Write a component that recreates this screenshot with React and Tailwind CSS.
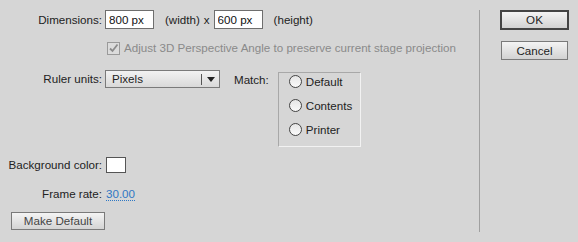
export default function App() {
  const font = { fontFamily: '"Liberation Sans", Arial, sans-serif' };
  return (
    <div
      className="w-[578px] h-[242px] bg-[#d6d6d6] text-[#222] text-[11.6px] flex overflow-hidden"
      style={font}
    >
      {/* left side: form */}
      <div className="w-[479px] flex flex-col pt-[10px]">
        {/* Dimensions */}
        <div className="flex items-center h-[19px]">
          <div className="w-[103px] text-right pr-[1px]">Dimensions:</div>
          <input
            readOnly
            value="800 px"
            className="ml-[2px] w-[49px] h-[19px] bg-white border border-[#6e6e6e] px-[3px] text-[11.6px] text-[#111] outline-none"
          />
          <span className="ml-[11px]">(width)</span>
          <span className="ml-[4px]">x</span>
          <input
            readOnly
            value="600 px"
            className="ml-[4px] w-[49px] h-[19px] bg-white border border-[#6e6e6e] px-[3px] text-[11.6px] text-[#111] outline-none"
          />
          <span className="ml-[11px]">(height)</span>
        </div>

        {/* Adjust 3D */}
        <div className="flex items-center h-[14px] mt-[12px] ml-[107px] text-[#8a8a8a]">
          <span className="w-[13px] h-[13px] border border-[#9a9a9a] bg-[#dcdcdc] flex items-center justify-center">
            <svg width="11" height="11" viewBox="0 0 11 11">
              <path d="M2 5.5 L4.5 8 L9.5 1.5" stroke="#8c8c8c" strokeWidth="1.8" fill="none" />
            </svg>
          </span>
          <span className="ml-[4px]">Adjust 3D Perspective Angle to preserve current stage projection</span>
        </div>

        {/* Ruler units + Match */}
        <div className="flex mt-[15px]">
          <div className="flex items-start">
            <div className="w-[103px] text-right pr-[1px] leading-[18px]">Ruler units:</div>
            <div className="ml-[2px] w-[115px] h-[18px] border border-[#7a7a7a] bg-gradient-to-b from-[#f2f2f2] to-[#d9d9d9] flex items-center">
              <span className="pl-[6px] flex-1">Pixels</span>
              <span className="w-[1px] h-[11px] bg-[#555]"></span>
              <span className="w-[17px] flex justify-center">
                <svg width="8" height="5" viewBox="0 0 8 5">
                  <path d="M0 0 H8 L4 5 Z" fill="#222" />
                </svg>
              </span>
            </div>
          </div>
          <div className="ml-[14px] leading-[18px] mt-[1px]">Match:</div>
          <div className="ml-[9px] mt-[2px] w-[83px] h-[75px] border border-t-[#a8a8a8] border-l-[#a8a8a8] border-r-[#f2f2f2] border-b-[#f2f2f2] flex flex-col pl-[10px] pt-[1px] gap-[9px]">
            {["Default", "Contents", "Printer"].map((t) => (
              <div key={t} className="flex items-center h-[15px]">
                <span className="w-[13px] h-[13px] rounded-full border border-[#444] bg-gradient-to-b from-[#e6e6e6] to-[#fafafa]"></span>
                <span className="ml-[4px]">{t}</span>
              </div>
            ))}
          </div>
        </div>

        {/* Background color */}
        <div className="flex items-center mt-[10px] h-[16px]">
          <div className="w-[103px] text-right pr-[1px]">Background color:</div>
          <span className="ml-[3px] w-[20px] h-[16px] bg-white border border-[#555]"></span>
        </div>

        {/* Frame rate */}
        <div className="flex items-center mt-[13px] h-[16px]">
          <div className="w-[103px] text-right pr-[1px]">Frame rate:</div>
          <span className="ml-[3px] text-[#2f78c4] border-b border-dotted border-[#2f78c4] leading-[13px]">30.00</span>
        </div>

        {/* Make Default */}
        <div className="mt-[10px] ml-[11px]">
          <button className="w-[94px] h-[18px] border border-[#7a7a7a] bg-gradient-to-b from-[#f4f4f4] to-[#d4d4d4] text-[#444] text-[11.6px] leading-[16px]">
            Make Default
          </button>
        </div>
      </div>

      {/* separator */}
      <div className="w-[1px] bg-[#a0a0a0] mt-[10px] mb-[10px]"></div>

      {/* right buttons */}
      <div className="flex flex-col pl-[20px] pt-[10px]">
        <button className="w-[69px] h-[20px] border-2 border-[#444] bg-gradient-to-b from-[#f4f4f4] to-[#d2d2d2] text-[#222] text-[11.6px] leading-[16px]">
          OK
        </button>
        <button className="mt-[11px] ml-[1px] w-[67px] h-[19px] border border-[#7a7a7a] bg-gradient-to-b from-[#f4f4f4] to-[#d2d2d2] text-[#222] text-[11.6px] leading-[17px]">
          Cancel
        </button>
      </div>
    </div>
  );
}
